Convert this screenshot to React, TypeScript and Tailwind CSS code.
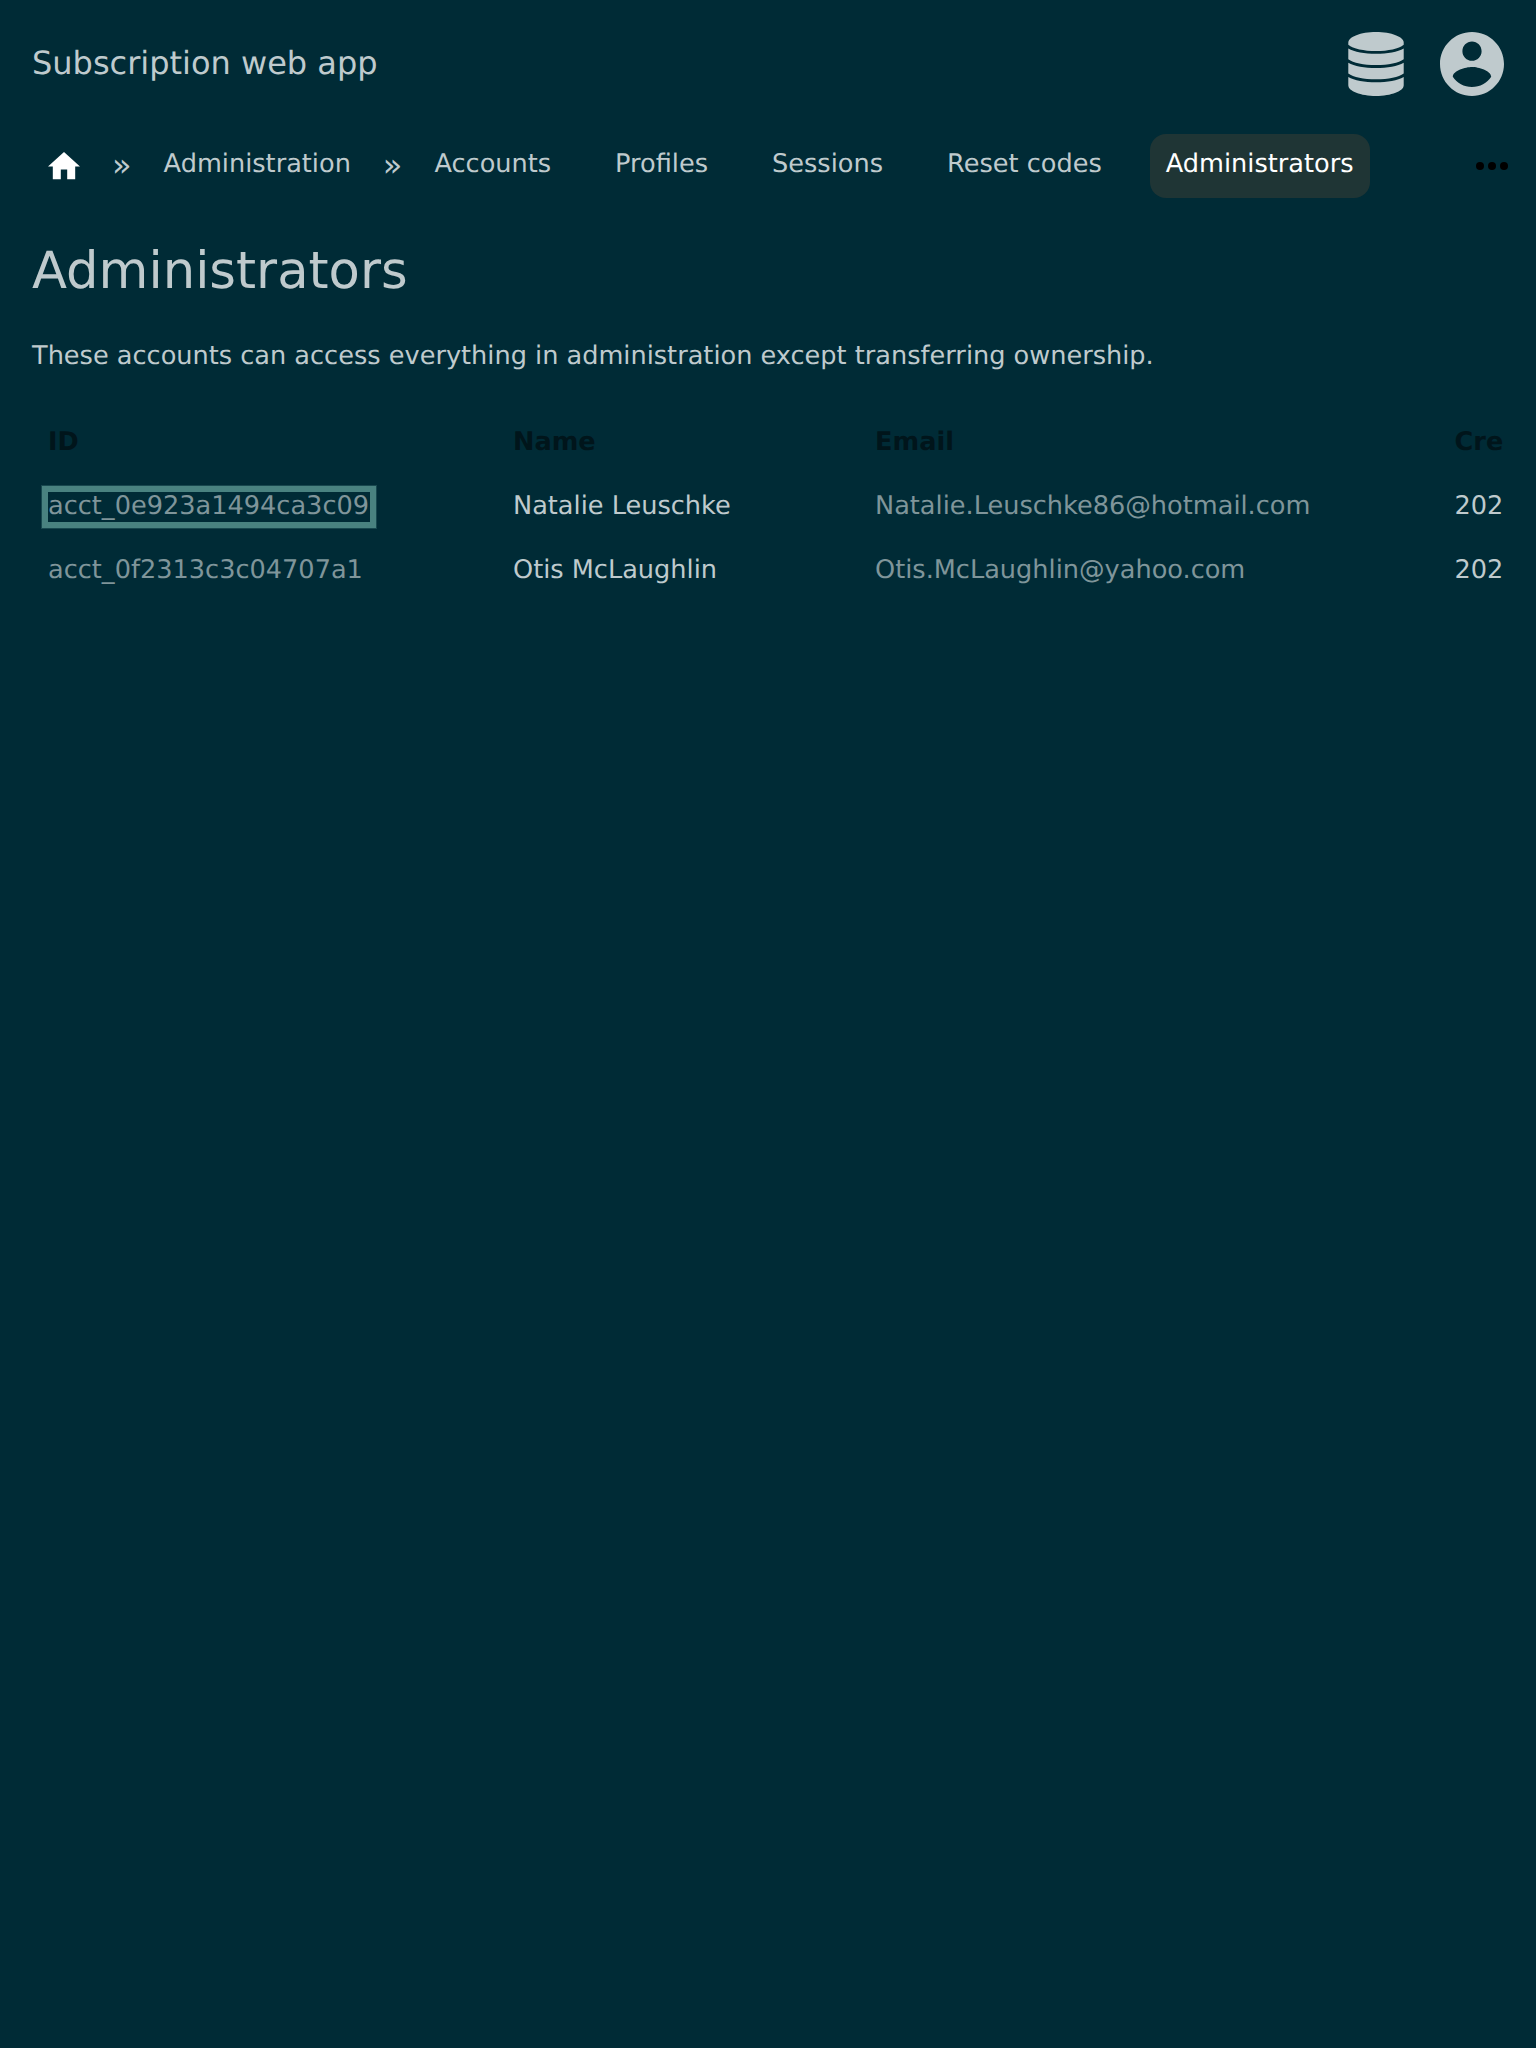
const accounts = [
  { id: "acct_0e923a1494ca3c09", name: "Natalie Leuschke", email: "Natalie.Leuschke86@hotmail.com", created: "202", focused: true },
  { id: "acct_0f2313c3c04707a1", name: "Otis McLaughlin", email: "Otis.McLaughlin@yahoo.com", created: "202", focused: false },
];

const columns = "grid h-16 grid-cols-[465px_362px_579.5px_1fr] items-center whitespace-nowrap pl-4 leading-[32px]";

function NavItem({ label, active = false }: { label: string; active?: boolean }) {
  return (
    <a className={active ? "block h-16 rounded-2xl bg-[#1f3535] px-4 leading-[60px] text-white" : "block h-16 px-4 leading-[60px]"}>
      {label}
    </a>
  );
}

// Four stacked discs
function DatabaseIcon() {
  return (
    <svg viewBox="-0.3 0 56.6 64" preserveAspectRatio="none" className="h-16 w-14 fill-current">
      <path d="M0 10.7C0 4.8 12.5 0 28 0s28 4.8 28 10.7v2C51 16.7 40.5 19 28 19S5 16.7 0 12.7z" />
      <path d="M0 16.5c6 3.4 16.5 5.3 28 5.3s22-1.9 28-5.3v10.7C51 31 40.5 33 28 33S5 31 0 27.2z" />
      <path d="M0 30.7c6 3.4 16.5 5.3 28 5.3s22-1.9 28-5.3v10.8c-5 3.8-15.5 5.8-28 5.8S5 45.3 0 41.5z" />
      <path d="M0 45c6 3.4 16.5 5.3 28 5.3S50 48.4 56 45v8.3C56 59.2 43.5 64 28 64S0 59.2 0 53.3z" />
    </svg>
  );
}

export default function App() {
  return (
    <div className="flex h-[2048px] w-[1536px] flex-col overflow-hidden bg-[#002b36] px-8 pt-8 font-['DejaVu_Sans',sans-serif] text-[25.6px] text-[#bfcacd] [text-rendering:geometricPrecision]">
      <header className="flex h-16 items-center justify-between">
        <h1 className="-mt-0.5 text-[32px] leading-[64px]">Subscription web app</h1>
        <div className="flex gap-9">
          <DatabaseIcon />
          <svg viewBox="2 2 20 20" className="size-16 fill-current">
            <path d="M12 2C6.48 2 2 6.48 2 12s4.48 10 10 10 10-4.48 10-10S17.52 2 12 2zm0 3c1.66 0 3 1.34 3 3s-1.34 3-3 3-3-1.34-3-3 1.34-3 3-3zm0 14.2c-2.5 0-4.71-1.28-6-3.22.03-1.99 4-3.08 6-3.08 1.99 0 5.97 1.09 6 3.08-1.29 1.94-3.5 3.22-6 3.22z" />
          </svg>
        </div>
      </header>

      <nav className="mt-[38px] flex h-16 items-center whitespace-nowrap">
        <svg viewBox="2 3 20 17" className="ml-4 h-[27.2px] w-8 fill-white">
          <path d="M10 20v-6h4v6h5v-8h3L12 3 2 12h3v8z" />
        </svg>
        <span className="ml-8 h-16 text-[32px] leading-[62px]">»</span>
        <div className="ml-4">
          <NavItem label="Administration" />
        </div>
        <span className="ml-4 h-16 text-[32px] leading-[62px]">»</span>
        <div className="ml-4 flex gap-8">
          <NavItem label="Accounts" />
          <NavItem label="Profiles" />
          <NavItem label="Sessions" />
          <NavItem label="Reset codes" />
          <NavItem label="Administrators" active />
        </div>
        <svg viewBox="4 10 16 4" className="-mr-1 ml-auto h-2 w-8 fill-black">
          <circle cx="6" cy="12" r="2" />
          <circle cx="12" cy="12" r="2" />
          <circle cx="18" cy="12" r="2" />
        </svg>
      </nav>

      <main>
        <h2 className="mt-[33px] text-[51.2px] leading-[80px]">Administrators</h2>
        <p className="mt-[13px] leading-[64px]">These accounts can access everything in administration except transferring ownership.</p>
        <div className="mt-[22px] overflow-hidden">
          <div className={columns + " font-bold text-[#00151b]"}>
            <span>ID</span>
            <span>Name</span>
            <span>Email</span>
            <span>Cre</span>
          </div>
          {accounts.map((a) => (
            <div key={a.id} className={columns}>
              <a
                className={
                  a.focused
                    ? "mt-0.5 block h-[30px] w-[322px] leading-[28px] text-[#7f959a] shadow-[0_0_0_7px_#18484f] outline-6 outline-[#498280]"
                    : "text-[#7f959a]"
                }
              >
                {a.id}
              </a>
              <span>{a.name}</span>
              <span className="text-[#7f959a]">{a.email}</span>
              <span>{a.created}</span>
            </div>
          ))}
        </div>
      </main>
    </div>
  );
}
